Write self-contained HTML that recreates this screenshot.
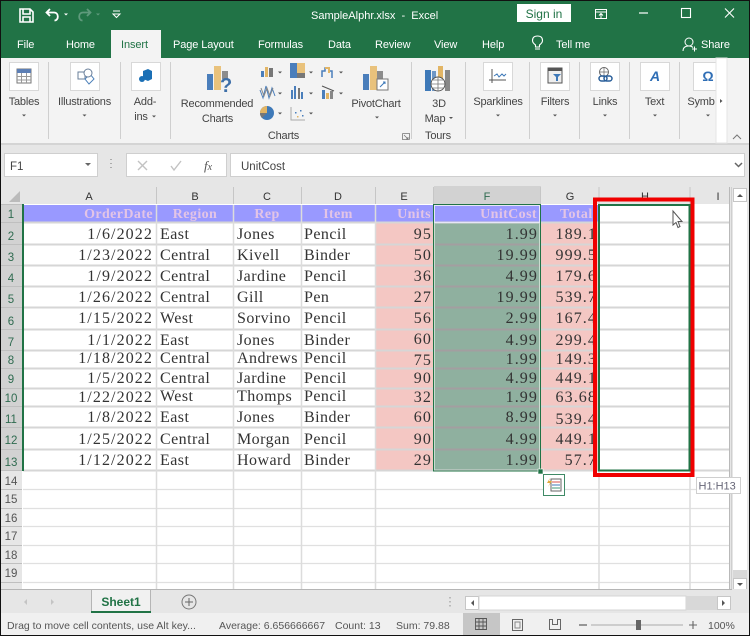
<!DOCTYPE html>
<html><head><meta charset="utf-8"><style>
html,body{margin:0;padding:0;background:#000}
svg{display:block;font-family:"Liberation Sans",sans-serif}
.s{font-family:"Liberation Serif",serif;font-size:16px;fill:#333;letter-spacing:.45px}
.n{font-family:"Liberation Serif",serif;font-size:16px;fill:#333;letter-spacing:1.100px;text-anchor:end}
.h{font-family:"Liberation Serif",serif;font-size:14px;font-weight:bold;fill:#e3c4e6;letter-spacing:.4px}
.w{font-size:11px;fill:#fff;letter-spacing:-.1px}
.l{font-size:11px;fill:#444;text-anchor:middle;letter-spacing:-.2px}
.k{font-size:11.500px;fill:#2f6b50;text-anchor:middle}
.g{font-size:11.500px;fill:#555;text-anchor:middle}
.t{font-size:10.500px;fill:#555}
</style></head><body>
<svg width="750" height="636" viewBox="0 0 750 636" xmlns="http://www.w3.org/2000/svg">
<rect width="750" height="636" fill="#e6e6e6"/>
<!-- title + tab bars -->
<rect x="1" y="1" width="748" height="57" fill="#217346"/>
<rect x="111" y="30" width="50" height="28" fill="#f3f3f3"/>
<rect x="1" y="58" width="748" height="85" fill="#f3f3f3"/>
<rect x="1" y="143" width="748" height="2" fill="#d4d4d4"/>
<!-- QAT -->
<path d="M20 9h10l3 3v10H20zM23 9v5h7V9M23 22v-5h7v5" fill="none" stroke="#fff" stroke-width="1.600"/>
<path d="M50 9l-3.500 3.500 3.500 3.500M47 12.500h7c5 0 5 8 .5 8" fill="none" stroke="#fff" stroke-width="1.800"/>
<path d="M64 13.500h4l-2 2z" fill="#fff"/>
<path d="M87 9l3.500 3.500-3.500 3.500M90 12.500h-7c-5 0-5 8-.5 8" fill="none" stroke="#5f9a7c" stroke-width="1.800"/>
<path d="M96 13.500h4l-2 2z" fill="#5f9a7c"/>
<path d="M113 11h7M113 14h7l-3.500 3.500z" fill="none" stroke="#fff" stroke-width="1"/>
<text x="311" y="19" style="font-size:11px;fill:#fff;white-space:pre" xml:space="preserve">SampleAlphr.xlsx  -  Excel</text>
<rect x="517" y="4" width="54" height="18" fill="#fff"/>
<text x="544" y="18" style="font-size:12px;fill:#217346;text-anchor:middle">Sign in</text>
<path d="M595.500 9.500h11v9h-11zM595.500 12h11M601 18v-4M599 15.500l2-2 2 2" fill="none" stroke="#fff"/>
<path d="M639 13h9" stroke="#fff" stroke-width="1.200"/>
<rect x="681.500" y="8.500" width="9" height="9" fill="none" stroke="#fff" stroke-width="1.100"/>
<path d="M725 8.500l9 9M734 8.500l-9 9" stroke="#fff" stroke-width="1.100"/>
<!-- tabs -->
<text class="w" x="17" y="48">File</text>
<text class="w" x="66" y="48">Home</text>
<text x="121" y="48" style="font-size:11px;fill:#217346;letter-spacing:-.1px">Insert</text>
<text class="w" x="173" y="48">Page Layout</text>
<text class="w" x="258" y="48">Formulas</text>
<text class="w" x="328" y="48">Data</text>
<text class="w" x="375" y="48">Review</text>
<text class="w" x="434" y="48">View</text>
<text class="w" x="482" y="48">Help</text>
<path d="M535 49h5M535.500 47h4v-2c2-1.500 3-3 3-4.500 0-3-2-4.500-5-4.500s-5 1.500-5 4.500c0 1.500 1 3 3 4.500z" fill="none" stroke="#fff" stroke-width="1.100"/>
<text class="w" x="556" y="48">Tell me</text>
<circle cx="689" cy="42" r="4" fill="none" stroke="#fff"/><path d="M683 51c0-4 3-5 6-5 1.500 0 3 .5 4 1.500M692 49h5M694.500 46.500v5" fill="none" stroke="#fff"/>
<text class="w" x="701" y="48">Share</text>
<!-- ribbon separators -->
<path d="M48.500 62v77M120.500 62v77M170.500 62v77M411.500 62v77M465.500 62v77M529.500 62v77M579.500 62v77M629.500 62v77M679.500 62v77" stroke="#cfcfcf"/>
<!-- white buttons -->
<g fill="#fff" stroke="#d8d8d8"><rect x="9.500" y="62.500" width="29" height="28"/><rect x="70.500" y="62.500" width="29" height="28"/><rect x="131.500" y="62.500" width="29" height="28"/><rect x="483.500" y="62.500" width="29" height="28"/><rect x="540.500" y="62.500" width="29" height="28"/><rect x="590.500" y="62.500" width="29" height="28"/><rect x="640.500" y="62.500" width="29" height="28"/><rect x="693.500" y="62.500" width="29" height="28"/></g>
<!-- tables -->
<rect x="17" y="69" width="14" height="14" fill="#fff" stroke="#777"/><rect x="17" y="69" width="14" height="4" fill="#5d7fb5"/><path d="M17 76.500h14M17 80h14M21.500 73v10M26.500 73v10" stroke="#999"/>
<!-- illustrations -->
<path d="M78 72h7v7h-7z" fill="none" stroke="#6a7f9a"/><path d="M85 79l5-5 4 5-5 5z" fill="#fff" stroke="#4b7fb8"/><circle cx="88" cy="73" r="4" fill="#fff" stroke="#6a7f9a"/>
<!-- addins -->
<path d="M143 71l5-2 4 2v8l-4 2-5-2z" fill="#1a6fb5"/><circle cx="142" cy="79" r="3" fill="#1a6fb5"/>
<!-- recommended charts -->
<rect x="207" y="74" width="6" height="16" fill="#4a7ebb"/><rect x="214" y="66" width="7" height="24" fill="#e9c27c"/><rect x="222" y="71" width="6" height="8" fill="#8c8c8c"/>
<text x="220" y="92" style="font-size:20px;font-weight:bold;fill:#3e6fa8">?</text>
<!-- charts small -->
<g><rect x="261" y="71" width="3" height="6" fill="#4a7ebb"/><rect x="265" y="67" width="3" height="10" fill="#e2b565"/><rect x="269" y="68" width="4" height="9" fill="#777"/><path d="M278 71.500h4l-2 2z" fill="#555"/>
<rect x="290" y="63" width="7" height="15" fill="#4a7ebb"/><rect x="297" y="63" width="8" height="10" fill="#e9c27c"/><rect x="297" y="73" width="8" height="5" fill="#777"/><path d="M309 71.500h4l-2 2z" fill="#555"/>
<path d="M322 77v-6h3v-3h4v3h3v7" fill="none" stroke="#4a7ebb" stroke-width="1.500"/><path d="M325 68h4v5" fill="none" stroke="#e2b565" stroke-width="2"/><path d="M339 71.500h4l-2 2z" fill="#555"/>
<path d="M260 90l3 8 3-12 3 12 3-10 3 8" fill="none" stroke="#4a7ebb"/><path d="M261 88l3 8 3-8 3 8 3-8" fill="none" stroke="#888"/><path d="M278 92.500h4l-2 2z" fill="#555"/>
<rect x="291" y="90" width="2" height="9" fill="#4a7ebb"/><rect x="294" y="86" width="2" height="13" fill="#4a7ebb"/><rect x="298" y="88" width="2" height="11" fill="#777"/><rect x="301" y="92" width="2" height="7" fill="#4a7ebb"/><path d="M309 92.500h4l-2 2z" fill="#555"/>
<rect x="322" y="90" width="3" height="9" fill="#4a7ebb"/><rect x="326" y="93" width="3" height="6" fill="#e2b565"/><rect x="330" y="91" width="3" height="8" fill="#888"/><path d="M322 86l12 5" stroke="#555"/><path d="M339 92.500h4l-2 2z" fill="#555"/>
<circle cx="267" cy="113" r="7" fill="#3e79b8"/><path d="M267 113v-7a7 7 0 0 0-7 7z" fill="#e2b565"/><path d="M267 113h-7a7 7 0 0 0 2 5z" fill="#777"/><path d="M278 112.500h4l-2 2z" fill="#555"/>
<path d="M291 107v13h14" fill="none" stroke="#aaa"/><g fill="#4a7ebb"><rect x="295" y="112" width="1.500" height="1.500"/><rect x="300" y="110" width="1.500" height="1.500"/><rect x="302" y="115" width="1.500" height="1.500"/></g><rect x="297" y="116" width="1.500" height="1.500" fill="#e2b565"/><path d="M309 112.500h4l-2 2z" fill="#555"/></g>
<!-- pivotchart -->
<rect x="363" y="74" width="6" height="16" fill="#4a7ebb"/><rect x="370" y="66" width="7" height="24" fill="#e9c27c"/><rect x="377" y="71" width="6" height="8" fill="#8c8c8c"/><rect x="377" y="79" width="11" height="11" fill="#fff" stroke="#777"/><path d="M380 87l5-5M383 82h2v2" stroke="#3e79b8" fill="none"/>
<!-- 3D map -->
<rect x="425" y="70" width="6" height="21" fill="#3e79b8"/><rect x="432" y="71" width="4" height="20" fill="#6f97c6"/><rect x="438" y="66" width="5" height="14" fill="#e2b565"/><rect x="445" y="70" width="5" height="21" fill="#888"/><circle cx="438" cy="84" r="7" fill="#fff" stroke="#555"/><path d="M431 84h14M438 77v14M433 80h10M433 88h10" stroke="#777" fill="none" stroke-width=".8"/>
<!-- sparklines -->
<path d="M492 69v14M489 80h17" stroke="#555" fill="none"/><path d="M494 76l3-2 2 3 3-3 2 2 2-2" stroke="#3e79b8" fill="none"/>
<!-- filters -->
<rect x="548" y="68" width="14" height="15" fill="#eee" stroke="#555"/><rect x="548" y="68" width="14" height="3" fill="#555"/><path d="M553 74h8l-3 3v4h-2v-4z" fill="#3e79b8"/>
<!-- links -->
<circle cx="604" cy="72" r="4.500" fill="#fff" stroke="#666"/><path d="M600 72h8M604 67.500v9" stroke="#666" fill="none" stroke-width=".7"/><rect x="599" y="76" width="8" height="5" rx="2.500" fill="none" stroke="#2a5f9a" stroke-width="1.500"/><rect x="604" y="76" width="8" height="5" rx="2.500" fill="none" stroke="#2a5f9a" stroke-width="1.500"/>
<!-- text -->
<text x="655" y="81" style="font-size:14px;font-weight:bold;font-style:italic;fill:#2f6eb5;text-anchor:middle;font-family:'Liberation Sans',sans-serif">A</text>
<!-- omega -->
<text x="708" y="81" style="font-size:14px;font-weight:bold;fill:#2f6eb5;text-anchor:middle">Ω</text>
<!-- ribbon labels -->
<text class="l" x="24" y="105">Tables</text>
<text class="l" x="84.500" y="105">Illustrations</text>
<text class="l" x="145" y="105">Add-</text>
<text class="l" x="141" y="120">ins</text>
<path d="M152 115.500h4l-2 2z" fill="#555"/>
<text class="l" x="217" y="107">Recommended</text>
<text class="l" x="217.500" y="122">Charts</text>
<text class="l" x="376" y="107">PivotChart</text>
<text class="l" x="439" y="107">3D</text>
<text class="l" x="435" y="122">Map</text>
<path d="M449 117h4l-2 2z" fill="#555"/>
<text class="l" x="498" y="105">Sparklines</text>
<text class="l" x="555" y="105">Filters</text>
<text class="l" x="605" y="105">Links</text>
<text class="l" x="654.500" y="105">Text</text>
<text class="l" x="701" y="105">Symb</text>
<text class="l" x="283.500" y="139">Charts</text>
<text class="l" x="438" y="139">Tours</text>
<g fill="#555"><path d="M22 114.500h4l-2 2z"/><path d="M82.500 114.500h4l-2 2z"/><path d="M375 116.500h4l-2 2z"/><path d="M496 114.500h4l-2 2z"/><path d="M553 114.500h4l-2 2z"/><path d="M603 114.500h4l-2 2z"/><path d="M653 114.500h4l-2 2z"/><path d="M706 114.500h4l-2 2z"/></g>
<path d="M402.500 133.500h7v6M402.500 133.500v6h7M404 135l4 4M408 139v-2M408 139h-2" fill="none" stroke="#777" stroke-width=".8"/>
<rect x="716" y="58" width="11" height="85" fill="#fff" stroke="#e4e4e4"/>
<path d="M720 99l2.500 2-2.500 2z" fill="#555"/>
<path d="M733 139l4-4 4 4" fill="none" stroke="#777"/>
<!-- formula bar -->
<rect x="4.500" y="153.500" width="93" height="23" fill="#fff" stroke="#cfcfcf"/>
<text x="10" y="170" style="font-size:11.500px;fill:#444">F1</text>
<path d="M85 163h6l-3 3z" fill="#666"/>
<path d="M111 159v1M111 163v1M111 167v1" stroke="#999" stroke-width="1.500"/>
<rect x="126.500" y="153.500" width="100" height="23" fill="#fff" stroke="#cfcfcf"/>
<path d="M138 161l9 9M147 161l-9 9" stroke="#c2c2c2" stroke-width="1.400"/>
<path d="M171 166l3 4 7-9" fill="none" stroke="#c2c2c2" stroke-width="1.400"/>
<text x="204" y="170" style="font-family:'Liberation Serif',serif;font-style:italic;font-size:13px;fill:#555">f<tspan font-size="10">x</tspan></text>
<rect x="230.500" y="153.500" width="514" height="23" fill="#fff" stroke="#cfcfcf"/>
<text x="241" y="170" style="font-size:11.500px;fill:#444">UnitCost</text>
<path d="M735 163l3.500 3.500 3.500-3.500" fill="none" stroke="#666" stroke-width="1.500"/>
<!-- grid bg -->
<rect x="1" y="187" width="729" height="402" fill="#fff"/>
<rect x="376" y="223" width="58" height="248" fill="#f4c7c3"/>
<rect x="541" y="223" width="58" height="248" fill="#f4c7c3"/>
<rect x="23" y="205" width="576" height="18" fill="#9999ff"/>
<rect x="434" y="223" width="107" height="248" fill="#8fb09f"/>
<!-- headers -->
<rect x="1" y="187" width="729" height="17" fill="#e6e6e6"/>
<rect x="434" y="186" width="107" height="18" fill="#d2d2d2"/>
<rect x="1" y="187" width="21" height="402" fill="#e6e6e6"/>
<rect x="1" y="204" width="21" height="267" fill="#d2d2d2"/>
<path d="M9 202l11-11v11z" fill="#bbb"/>
<!-- gridlines -->
<path d="M23 222.500H730M23 244.500H730M23 265.500H730M23 286.500H730M23 307.500H730M23 329.500H730M23 350.500H730M23 368.500H730M23 388.500H730M23 406.500H730M23 427.500H730M23 449.500H730M23 470.500H730" stroke="#d6d6d6" stroke-width="2"/>
<path d="M23 489.500H730M23 508.500H730M23 526.500H730M23 545.500H730M23 563.500H730M23 582.500H730" stroke="#e0e0e0" stroke-width="1.200"/>
<path d="M156.500 205V589M233.500 205V589M301.500 205V589M375.500 205V589M599 205V589M690 205V589" stroke="#dcdcdc" stroke-width="1.500"/>
<path d="M434 244.500H540M434 265.500H540M434 286.500H540M434 307.500H540M434 329.500H540M434 350.500H540M434 368.500H540M434 388.500H540M434 406.500H540M434 427.500H540M434 449.500H540" stroke="#a39ea0" stroke-width="2"/>
<path d="M729.500 187V589" stroke="#b9b9b9"/><path d="M731.500 187V589" stroke="#cfcfcf"/>
<path d="M156.500 187v17M233.500 187v17M301.500 187v17M375.500 187v17M433.500 187v17M540.500 187v17M599 187v17M690 187v17" stroke="#c6c6c6"/>
<path d="M1 204.500h21M1 222.500h21M1 244.500h21M1 265.500h21M1 286.500h21M1 307.500h21M1 329.500h21M1 350.500h21M1 368.500h21M1 388.500h21M1 406.500h21M1 427.500h21M1 449.500h21M1 470.500h21M1 489.500h21M1 508.500h21M1 526.500h21M1 545.500h21M1 563.500h21M1 582.500h21" stroke="#bfbfbf"/>
<rect x="22" y="204" width="2" height="267" fill="#217346"/>
<!-- col letters -->
<g style="font-size:11px;fill:#333;text-anchor:middle"><text x="89" y="200">A</text><text x="195" y="200">B</text><text x="267" y="200">C</text><text x="338" y="200">D</text><text x="404" y="200">E</text><text x="487" y="200" style="fill:#2f6b50">F</text><text x="570" y="200">G</text><text x="645" y="200">H</text><text x="718" y="200">I</text></g>
<!-- row numbers -->
<g><text class="k" x="11" y="218">1</text><text class="k" x="11" y="240">2</text><text class="k" x="11" y="261">3</text><text class="k" x="11" y="282">4</text><text class="k" x="11" y="303">5</text><text class="k" x="11" y="325">6</text><text class="k" x="11" y="346">7</text><text class="k" x="11" y="364">8</text><text class="k" x="11" y="383">9</text><text class="k" x="11" y="402">10</text><text class="k" x="11" y="423">11</text><text class="k" x="11" y="444">12</text><text class="k" x="11" y="466">13</text></g>
<text class="g" x="11" y="485">14</text><text class="g" x="11" y="503">15</text><text class="g" x="11" y="522">16</text><text class="g" x="11" y="540">17</text><text class="g" x="11" y="559">18</text><text class="g" x="11" y="577">19</text>
<!-- header cells -->
<text class="h" x="153" y="218" text-anchor="end">OrderDate</text>
<text class="h" x="195" y="218" text-anchor="middle">Region</text>
<text class="h" x="267" y="218" text-anchor="middle">Rep</text>
<text class="h" x="338" y="218" text-anchor="middle">Item</text>
<text class="h" x="431" y="218" text-anchor="end">Units</text>
<text class="h" x="537" y="218" text-anchor="end">UnitCost</text>
<text class="h" x="560" y="218">Total</text>
<!-- data -->
<g class="n"><text x="153" y="239">1/6/2022</text><text x="153" y="260">1/23/2022</text><text x="153" y="281">1/9/2022</text><text x="153" y="302">1/26/2022</text><text x="153" y="323">1/15/2022</text><text x="153" y="345">1/1/2022</text><text x="153" y="363">1/18/2022</text><text x="153" y="383">1/5/2022</text><text x="153" y="402">1/22/2022</text><text x="153" y="422">1/8/2022</text><text x="153" y="444">1/25/2022</text><text x="153" y="465">1/12/2022</text>
<text x="432" y="239">95</text><text x="432" y="260">50</text><text x="432" y="281">36</text><text x="432" y="302">27</text><text x="432" y="323">56</text><text x="432" y="344">60</text><text x="432" y="365">75</text><text x="432" y="383">90</text><text x="432" y="402">32</text><text x="432" y="422">60</text><text x="432" y="444">90</text><text x="432" y="465">29</text>
<text x="538" y="239">1.99</text><text x="538" y="260">19.99</text><text x="538" y="281">4.99</text><text x="538" y="302">19.99</text><text x="538" y="323">2.99</text><text x="538" y="345">4.99</text><text x="538" y="364">1.99</text><text x="538" y="383">4.99</text><text x="538" y="402">1.99</text><text x="538" y="422">8.99</text><text x="538" y="444">4.99</text><text x="538" y="465">1.99</text>
<text x="597" y="239">189.1</text><text x="597" y="260">999.5</text><text x="597" y="281">179.6</text><text x="597" y="302">539.7</text><text x="597" y="323">167.4</text><text x="597" y="345">299.4</text><text x="597" y="364">149.3</text><text x="597" y="383">449.1</text><text x="597" y="402">63.68</text><text x="597" y="424">539.4</text><text x="597" y="444">449.1</text><text x="597" y="465">57.7</text></g>
<g class="s"><text x="160" y="239">East</text><text x="160" y="260">Central</text><text x="160" y="281">Central</text><text x="160" y="302">Central</text><text x="160" y="323">West</text><text x="160" y="345">East</text><text x="160" y="363">Central</text><text x="160" y="383">Central</text><text x="160" y="401">West</text><text x="160" y="422">East</text><text x="160" y="444">Central</text><text x="160" y="465">East</text>
<text x="237" y="239">Jones</text><text x="237" y="260">Kivell</text><text x="237" y="281">Jardine</text><text x="237" y="302">Gill</text><text x="237" y="323">Sorvino</text><text x="237" y="345">Jones</text><text x="237" y="363">Andrews</text><text x="237" y="383">Jardine</text><text x="237" y="401">Thomps</text><text x="237" y="422">Jones</text><text x="237" y="444">Morgan</text><text x="237" y="465">Howard</text>
<text x="304" y="239">Pencil</text><text x="304" y="260">Binder</text><text x="304" y="281">Pencil</text><text x="304" y="302">Pen</text><text x="304" y="323">Pencil</text><text x="304" y="345">Binder</text><text x="304" y="363">Pencil</text><text x="304" y="383">Pencil</text><text x="304" y="401">Pencil</text><text x="304" y="422">Binder</text><text x="304" y="444">Pencil</text><text x="304" y="465">Binder</text></g>
<!-- F selection -->
<rect x="433.500" y="204.500" width="107" height="266.500" fill="none" stroke="#217346"/>
<rect x="434.500" y="205.500" width="105" height="17" fill="none" stroke="#e6e6f6"/>
<path d="M434.500 223V470M539.500 223V470" stroke="#c9dccf"/>
<rect x="538" y="469" width="5" height="5" fill="#217346" stroke="#fff" stroke-width=".6"/>
<!-- quick analysis -->
<rect x="543.500" y="474.500" width="21" height="21" fill="#fff" stroke="#3f8a66"/>
<rect x="551" y="479" width="10" height="12" fill="#fff" stroke="#666"/><path d="M552 482h8" stroke="#d9534f"/><path d="M552 485h8" stroke="#3e79b8"/><path d="M552 488h8" stroke="#3f9a7a"/><path d="M550 478l-3 5h3l-2 4 4-6h-3z" fill="#e2a93b"/>
<!-- H move outline & red box -->
<rect x="599" y="205" width="90.500" height="265.500" fill="none" stroke="#217346" stroke-width="2"/>
<rect x="595" y="199.500" width="97.500" height="275.500" fill="none" stroke="#f00000" stroke-width="4"/>
<!-- cursor -->
<path d="M673 211v14l3-2.500 2 5 2-1-2-5h4z" fill="#fff" stroke="#555"/>
<!-- vscroll -->
<rect x="733" y="188" width="14" height="401" fill="#fff"/>
<rect x="733" y="570" width="14" height="8" fill="#d8d8d8"/>
<rect x="733.500" y="188.500" width="13" height="13" fill="#fff" stroke="#c6c6c6"/>
<path d="M737 197l3-3 3 3z" fill="#555"/>
<rect x="733.500" y="578.500" width="13" height="12" fill="#fff" stroke="#c6c6c6"/>
<path d="M737 583h6l-3 3z" fill="#555"/>
<!-- tooltip -->
<rect x="696.500" y="477.500" width="44" height="16" fill="#fff" stroke="#cfcfcf"/>
<text x="698.500" y="489.500" style="font-size:11px;fill:#667">H1:H13</text>
<!-- sheet tabs -->
<rect x="1" y="589" width="748" height="24" fill="#e6e6e6"/>
<path d="M1 589.500H91M151 589.500H732" stroke="#b5b5b5"/>
<rect x="91.500" y="589.500" width="59" height="22" fill="#f1f1f1" stroke="#b5b5b5"/>
<rect x="91" y="611" width="60" height="2" fill="#217346"/>
<text x="121" y="606" style="font-size:12px;font-weight:bold;fill:#217346;text-anchor:middle">Sheet1</text>
<path d="M27 599l-3 3 3 3z" fill="#c4c4c4"/><path d="M51 599l3 3-3 3z" fill="#c4c4c4"/>
<circle cx="189" cy="602" r="7" fill="none" stroke="#777"/><path d="M185 602h8M189 598v8" stroke="#666"/>
<path d="M450 597v1.500M450 601v1.500M450 605v1.500" stroke="#aaa" stroke-width="1.500"/>
<rect x="465.500" y="596.500" width="13" height="13" fill="#fff" stroke="#c6c6c6"/><path d="M474 600l-3 3 3 3z" fill="#555"/>
<rect x="479" y="596" width="207" height="14" fill="#fff" stroke="#d4d4d4"/>
<rect x="686" y="596" width="31" height="14" fill="#d8d8d8"/>
<rect x="717.500" y="596.500" width="13" height="13" fill="#fff" stroke="#c6c6c6"/><path d="M722 600l3 3-3 3z" fill="#555"/>
<!-- status bar -->
<rect x="1" y="613" width="748" height="22" fill="#f0f0f0"/>
<rect x="463" y="613" width="37" height="22" fill="#c6c6c6"/>
<text class="t" x="7" y="629">Drag to move cell contents, use Alt key...</text>
<text class="t" x="219" y="629">Average: 6.656666667</text>
<text class="t" x="335" y="629">Count: 13</text>
<text class="t" x="396" y="629">Sum: 79.88</text>
<path d="M475.500 618.500h11v11h-11zM475.500 622h11M475.500 626h11M479 618v12M483 618v12" fill="none" stroke="#555" stroke-width=".9"/>
<path d="M512.500 619.500h10v11h-10z" fill="none" stroke="#666"/><rect x="515" y="622" width="5" height="6" fill="none" stroke="#888"/>
<path d="M549.500 619.500v10h11v-10h-3v5h-5v-5z" fill="none" stroke="#666"/>
<path d="M579 625h8" stroke="#666" stroke-width="1.300"/>
<path d="M591 625h92" stroke="#aaa"/>
<rect x="636" y="620" width="5" height="10" fill="#666"/>
<path d="M689 625h8M693 621v8" stroke="#666" stroke-width="1.100"/>
<text class="t" x="708" y="629">100%</text>
<!-- outer frame -->
<rect x=".5" y=".5" width="749" height="635" fill="none" stroke="#111"/>
</svg>
</body></html>
